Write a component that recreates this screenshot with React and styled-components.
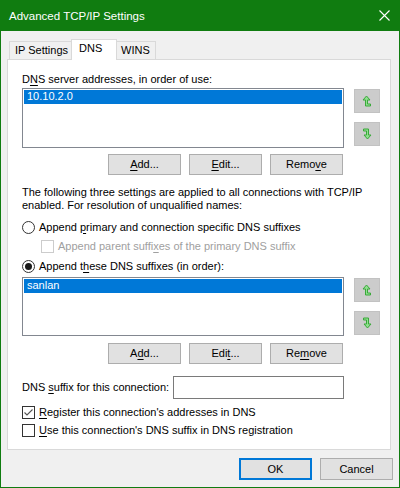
import React from "react";
import styled, { createGlobalStyle } from "styled-components";

const Global = createGlobalStyle`
  html, body { margin: 0; padding: 0; background: #f0f0f0; }
  * { box-sizing: border-box; }
`;

const Window = styled.div`
  width: 400px;
  height: 488px;
  background: #f0f0f0;
  border: 1px solid #107c10;
  border-top: none;
  display: flex;
  flex-direction: column;
  font-family: "Liberation Sans", Arial, sans-serif;
  font-size: 11px;
  color: #000;
`;

const TitleBar = styled.div`
  height: 31px;
  margin: 0 -1px;
  background: #107c10;
  color: #fff;
  display: flex;
  align-items: center;
  justify-content: space-between;
  padding: 0 10px 0 9px;
  font-size: 11.5px;
`;

const CloseGlyph = styled.svg`
  width: 11px;
  height: 11px;
  display: block;
`;

const Body = styled.div`
  flex: 1;
  display: flex;
  flex-direction: column;
  padding: 8px 8px 0 6px;
`;

const TabStrip = styled.div`
  display: flex;
  align-items: flex-end;
  height: 20px;
  padding-left: 2px;
  position: relative;
  z-index: 1;
`;

const Tab = styled.div`
  width: ${(p) => p.$w}px;
  height: ${(p) => (p.$active ? "21px" : "18px")};
  margin-bottom: ${(p) => (p.$active ? "-1px" : "0")};
  padding: 0 0 ${(p) => (p.$active ? "3px" : "0")} ${(p) => p.$pl}px;
  border: 1px solid #d9d9d9;
  border-bottom: none;
  background: ${(p) => (p.$active ? "#fff" : "#f0f0f0")};
  display: flex;
  align-items: center;
  line-height: 15px;
  white-space: nowrap;
  margin-left: ${(p) => (p.$first ? "0" : "-1px")};
  position: relative;
  z-index: ${(p) => (p.$active ? 2 : 1)};
`;

const Panel = styled.div`
  height: 391px;
  background: #fff;
  border: 1px solid #d9d9d9;
  padding: 12px 0 0 14px;
  display: flex;
  flex-direction: column;
`;

const Label = styled.div`
  line-height: 15px;
  white-space: nowrap;
  color: ${(p) => (p.$disabled ? "#a0a0a0" : "#000")};
`;

const Key = styled.span`
  text-decoration: underline;
  text-underline-offset: 2px;
`;

const ListRow = styled.div`
  display: flex;
  margin-top: ${(p) => p.$mt}px;
`;

const ListBox = styled.div`
  width: 322px;
  height: ${(p) => p.$h}px;
  border: 1px solid #828790;
  background: #fff;
  padding: 1px;
`;

const ListItem = styled.div`
  height: 14px;
  line-height: 13px;
  background: #0078d7;
  color: #fff;
  padding-left: 3px;
  white-space: nowrap;
`;

const ArrowCol = styled.div`
  display: flex;
  flex-direction: column;
  gap: 9px;
  margin-left: 10px;
  padding-top: 1px;
`;

const ArrowBtn = styled.div`
  width: 26px;
  height: 24px;
  background: #cccccc;
  border: 1px solid #c2c2c2;
  display: flex;
  align-items: center;
  justify-content: center;
`;

const ButtonRow = styled.div`
  display: flex;
  justify-content: flex-end;
  gap: 8px;
  width: 321px;
  margin-top: ${(p) => p.$mt}px;
`;

const Button = styled.div`
  width: 73px;
  height: ${(p) => p.$h || 21}px;
  background: #e1e1e1;
  border: ${(p) => (p.$default ? "2px solid #0078d7" : "1px solid #adadad")};
  display: flex;
  align-items: center;
  justify-content: center;
  line-height: 15px;
`;

const Paragraph = styled.div`
  margin-top: 11px;
  line-height: 13px;
  white-space: nowrap;
`;

const OptionRow = styled.div`
  display: flex;
  align-items: center;
  height: 16px;
  margin-top: ${(p) => p.$mt}px;
  margin-left: ${(p) => p.$indent || 0}px;
  gap: 4px;
`;

const Radio = styled.div`
  width: 13px;
  height: 13px;
  border-radius: 50%;
  border: 1px solid #333;
  background: #fff;
  display: flex;
  align-items: center;
  justify-content: center;
  flex: none;
  &::after {
    content: "";
    width: 7px;
    height: 7px;
    border-radius: 50%;
    background: ${(p) => (p.$checked ? "#1a1a1a" : "transparent")};
  }
`;

const CheckBox = styled.div`
  width: 13px;
  height: 13px;
  border: 1px solid ${(p) => (p.$disabled ? "#cccccc" : "#333")};
  background: #fff;
  flex: none;
  display: flex;
  align-items: center;
  justify-content: center;
`;

const SuffixRow = styled.div`
  display: flex;
  align-items: center;
  margin-top: 12px;
`;

const SuffixLabel = styled.div`
  width: 151px;
  line-height: 15px;
  white-space: nowrap;
`;

const TextInput = styled.div`
  width: 171px;
  height: 23px;
  border: 1px solid #7a7a7a;
  background: #fff;
`;

const Footer = styled.div`
  display: flex;
  justify-content: flex-end;
  gap: 8px;
  margin-top: 8px;
  margin-right: -2px;
`;

const UpArrow = () => (
  <svg width="10" height="12" viewBox="0 0 10 12">
    <polygon
      points="8.5,11 3.5,11 3.5,5 1,5 4.5,1 8,5 5.5,5 5.5,9 8.5,9"
      fill="#8fe08f"
      stroke="#3aa83a"
      strokeWidth="1"
    />
  </svg>
);

const DownArrow = () => (
  <svg width="10" height="12" viewBox="0 0 10 12">
    <polygon
      points="1.5,1 6.5,1 6.5,7 9,7 5.5,11 2,7 4.5,7 4.5,3 1.5,3"
      fill="#8fe08f"
      stroke="#3aa83a"
      strokeWidth="1"
    />
  </svg>
);

const Check = () => (
  <svg width="11" height="11" viewBox="0 0 11 11">
    <polyline points="1.5,5.5 4,8 9.5,2.5" fill="none" stroke="#555" strokeWidth="1.1" />
  </svg>
);

const Arrows = () => (
  <ArrowCol>
    <ArrowBtn>
      <UpArrow />
    </ArrowBtn>
    <ArrowBtn>
      <DownArrow />
    </ArrowBtn>
  </ArrowCol>
);

export default function App() {
  return (
    <>
      <Global />
      <Window>
        <TitleBar>
          <span>Advanced TCP/IP Settings</span>
          <CloseGlyph viewBox="0 0 11 11">
            <path d="M0.5 0.5 L10.5 10.5 M10.5 0.5 L0.5 10.5" stroke="#fff" strokeWidth="1.1" />
          </CloseGlyph>
        </TitleBar>
        <Body>
          <TabStrip>
            <Tab $first $w={63} $pl={5}>IP Settings</Tab>
            <Tab $active $w={46} $pl={7}>DNS</Tab>
            <Tab $w={40} $pl={4}>WINS</Tab>
          </TabStrip>
          <Panel>
            <Label>
              D<Key>N</Key>S server addresses, in order of use:
            </Label>
            <ListRow $mt={1}>
              <ListBox $h={60}>
                <ListItem>10.10.2.0</ListItem>
              </ListBox>
              <Arrows />
            </ListRow>
            <ButtonRow $mt={6}>
              <Button>
                <span><Key>A</Key>dd...</span>
              </Button>
              <Button>
                <span><Key>E</Key>dit...</span>
              </Button>
              <Button>
                <span>Remo<Key>v</Key>e</span>
              </Button>
            </ButtonRow>
            <Paragraph>
              The following three settings are applied to all connections with TCP/IP
              <br />
              enabled. For resolution of unqualified names:
            </Paragraph>
            <OptionRow $mt={7}>
              <Radio />
              <Label>
                Append <Key>p</Key>rimary and connection specific DNS suffixes
              </Label>
            </OptionRow>
            <OptionRow $mt={3} $indent={19}>
              <CheckBox $disabled />
              <Label $disabled>
                Append parent suffi<Key>x</Key>es of the primary DNS suffix
              </Label>
            </OptionRow>
            <OptionRow $mt={4}>
              <Radio $checked />
              <Label>
                Append t<Key>h</Key>ese DNS suffixes (in order):
              </Label>
            </OptionRow>
            <ListRow $mt={3}>
              <ListBox $h={59}>
                <ListItem>sanlan</ListItem>
              </ListBox>
              <Arrows />
            </ListRow>
            <ButtonRow $mt={7}>
              <Button>
                <span>A<Key>d</Key>d...</span>
              </Button>
              <Button>
                <span>Edi<Key>t</Key>...</span>
              </Button>
              <Button>
                <span>Re<Key>m</Key>ove</span>
              </Button>
            </ButtonRow>
            <SuffixRow>
              <SuffixLabel>
                DNS <Key>s</Key>uffix for this connection:
              </SuffixLabel>
              <TextInput />
            </SuffixRow>
            <OptionRow $mt={5}>
              <CheckBox>
                <Check />
              </CheckBox>
              <Label>
                <Key>R</Key>egister this connection's addresses in DNS
              </Label>
            </OptionRow>
            <OptionRow $mt={2}>
              <CheckBox />
              <Label>
                <Key>U</Key>se this connection's DNS suffix in DNS registration
              </Label>
            </OptionRow>
          </Panel>
          <Footer>
            <Button $default $h={22}>OK</Button>
            <Button $h={22}>Cancel</Button>
          </Footer>
        </Body>
      </Window>
    </>
  );
}
